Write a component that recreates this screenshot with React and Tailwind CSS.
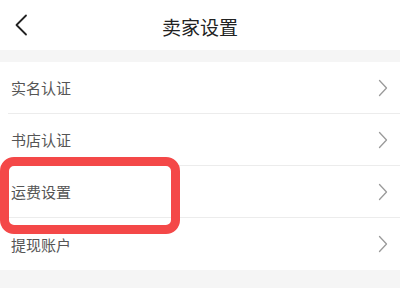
export default function App() {
  const rows = ["实名认证", "书店认证", "运费设置", "提现账户"];
  return (
    <div
      className="relative w-[400px] h-[288px] bg-[#f5f5f5] overflow-hidden"
      style={{ fontFamily: '"Noto Sans CJK SC", "Noto Sans", sans-serif' }}
    >
      <div className="relative h-[50px] bg-white flex items-center justify-center">
        <svg
          className="absolute left-[14px] top-[14px]"
          width="14"
          height="22"
          viewBox="0 0 14 22"
          fill="none"
        >
          <path d="M12 1.5 L2.5 11 L12 20.5" stroke="#222" strokeWidth="1.8" strokeLinecap="round" strokeLinejoin="round" />
        </svg>
        <span className="text-[19px] text-[#222] leading-none pt-[2px]">卖家设置</span>
      </div>
      <div className="h-[12px]" />
      <div className="bg-white">
        {rows.map((r, i) => (
          <div key={r} className="h-[52px] flex flex-col">
            <div className="flex-1 flex items-center justify-between pl-[11px] pr-[12px]">
              <span className="text-[15px] text-[#555] leading-none">{r}</span>
              <svg width="10" height="18" viewBox="0 0 10 18" fill="none">
                <path d="M1.5 1.5 L8.5 9 L1.5 16.5" stroke="#9a9a9a" strokeWidth="1.3" strokeLinecap="round" strokeLinejoin="round" />
              </svg>
            </div>
            {i < rows.length - 1 && <div className="h-px ml-[8px] bg-[#ececec]" />}
          </div>
        ))}
      </div>
      <div className="absolute left-0 top-[157px] w-[180px] h-[77px] border-[9px] border-[#f44848] rounded-[14px]" />
    </div>
  );
}
